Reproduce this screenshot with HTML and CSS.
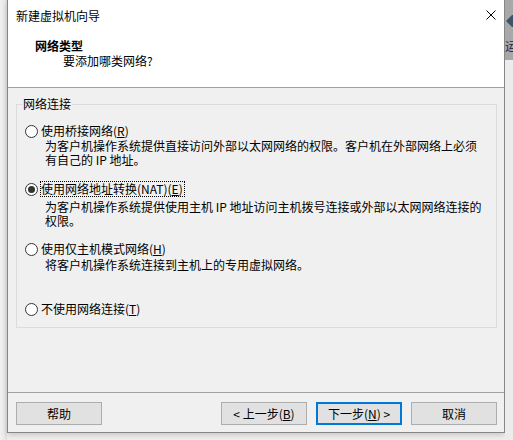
FILE: index.html
```html
<!DOCTYPE html>
<html lang="zh-CN">
<head>
<meta charset="utf-8">
<title>新建虚拟机向导</title>
<link rel="stylesheet" href="styles.css">
</head>
<body>
<div class="screen">
  <div class="left-bg"></div>
  <div class="window">
    <div class="titlebar">
      <span class="title">新建虚拟机向导</span>
      <svg class="close" width="10" height="10" viewBox="0 0 10 10"><path d="M0.5 0.5L9.5 9.5M9.5 0.5L0.5 9.5" stroke="#000" stroke-width="1" fill="none"/></svg>
    </div>
    <div class="header">
      <div class="h-title">网络类型</div>
      <div class="h-sub">要添加哪类网络?</div>
    </div>
    <div class="body">
      <fieldset class="group">
        <legend>网络连接</legend>
        <div class="opt opt1">
          <div class="row"><span class="radio"></span><span class="label">使用桥接网络(<u>R</u>)</span></div>
          <div class="desc">为客户机操作系统提供直接访问外部以太网网络的权限。客户机在外部网络上必须<br>有自己的 IP 地址。</div>
        </div>
        <div class="opt opt2">
          <div class="row"><span class="radio checked"></span><span class="label focus">使用网络地址转换(NAT)(<u>E</u>)</span></div>
          <div class="desc">为客户机操作系统提供使用主机 IP 地址访问主机拨号连接或外部以太网网络连接的<br>权限。</div>
        </div>
        <div class="opt opt3">
          <div class="row"><span class="radio"></span><span class="label">使用仅主机模式网络(<u>H</u>)</span></div>
          <div class="desc">将客户机操作系统连接到主机上的专用虚拟网络。</div>
        </div>
        <div class="opt opt4">
          <div class="row"><span class="radio"></span><span class="label">不使用网络连接(<u>T</u>)</span></div>
        </div>
      </fieldset>
    </div>
    <div class="footer">
      <button class="btn help">帮助</button>
      <button class="btn">&lt; 上一步(<u>B</u>)</button>
      <button class="btn default">下一步(<u>N</u>) &gt;</button>
      <button class="btn">取消</button>
    </div>
  </div>
  <div class="right-bg">
    <div class="rb-top">
      <svg class="rb-arrow" width="8" height="12" viewBox="0 0 8 12"><path d="M1 6L7 0H8V12H7Z" fill="#3f5266"/></svg>
      <span class="rb-char">运</span>
    </div>
    <div class="rb-rest"></div>
  </div>
</div>
</body>
</html>
```
FILE: styles.css
```css
body {
  margin: 0;
  background: #f0f0f0;
  font-family: "Noto Sans CJK SC", "Noto Sans", sans-serif;
  font-size: 12px;
  color: #000;
}

.screen {
  display: flex;
  width: 513px;
  height: 440px;
  overflow: hidden;
}

.left-bg {
  width: 7px;
  flex: none;
  background: linear-gradient(to right, #f0f0f0 0%, #ebebeb 60%, #dedede 100%);
}

.window {
  width: 498px;
  height: 433px;
  flex: none;
  box-sizing: border-box;
  border: 1px solid #868686;
  border-top: none;
  background: #f0f0f0;
  display: flex;
  flex-direction: column;
  box-shadow: 0 2px 6px rgba(0, 0, 0, 0.18);
}

.titlebar {
  height: 31px;
  flex: none;
  background: #fff;
  display: flex;
  align-items: center;
  justify-content: space-between;
  padding: 0 8px;
}

.title {
  line-height: 14px;
}

.close {
  display: block;
  margin-top: -1px;
}

.header {
  height: 57px;
  flex: none;
  box-sizing: border-box;
  background: #fff;
  border-bottom: 1px solid #a0a0a0;
  padding-top: 8px;
}

.h-title {
  font-weight: bold;
  line-height: 14px;
  padding-left: 27px;
}

.h-sub {
  line-height: 14px;
  padding-left: 55px;
  margin-top: 1px;
}

.body {
  flex: 1;
  padding-top: 9px;
}

.group {
  margin: 0 7px 0 8px;
  padding: 0 0 10px 0;
  border: 1px solid #dcdcdc;
  min-width: 0;
}

.group legend {
  margin-left: 5px;
  padding: 0 1px;
  line-height: 14px;
}

.opt {
  padding-left: 8px;
}

.opt1 { margin-top: 12px; }
.opt2 { margin-top: 14px; }
.opt3 { margin-top: 13px; }
.opt4 { margin-top: 29px; }

.row {
  display: flex;
  align-items: center;
  height: 16px;
}

.radio {
  width: 13px;
  height: 13px;
  box-sizing: border-box;
  border: 1px solid #333;
  border-radius: 50%;
  background: #fff;
  flex: none;
  margin-right: 2px;
  display: flex;
  align-items: center;
  justify-content: center;
}

.radio.checked::after {
  content: "";
  width: 7px;
  height: 7px;
  border-radius: 50%;
  background: #333;
}

.label {
  line-height: 14px;
  white-space: nowrap;
  margin-left: 1px;
}

.label.focus {
  margin-left: 0;
  border: 1px dotted #000;
  border-left-width: 1px;
  padding-right: 1px;
}

u {
  text-underline-offset: 1px;
}

.desc {
  margin-left: 20px;
  margin-top: 0;
  line-height: 14px;
  white-space: nowrap;
}

.opt2 .desc { margin-top: 3px; }
.opt3 .desc { margin-top: 1px; }

.footer {
  flex: none;
  border-top: 1px solid #a0a0a0;
  display: flex;
  gap: 9px;
  padding: 9px 7px 7px 8px;
}

.btn {
  width: 86px;
  height: 23px;
  box-sizing: border-box;
  border: 1px solid #adadad;
  background: #e1e1e1;
  font-family: inherit;
  font-size: 12px;
  color: #000;
  padding: 0;
  margin: 0;
  line-height: 19px;
}

.btn.help {
  margin-right: auto;
}

.btn.default {
  border: 2px solid #0078d7;
}

.right-bg {
  width: 8px;
  flex: none;
  display: flex;
  flex-direction: column;
  overflow: hidden;
}

.rb-top {
  height: 60px;
  flex: none;
  background: #a8a8a8;
  overflow: hidden;
}

.rb-arrow {
  display: block;
  margin-top: 15px;
}

.rb-char {
  display: block;
  margin-top: 13px;
  line-height: 12px;
  color: #2c2450;
  white-space: nowrap;
}

.rb-rest {
  flex: 1;
  background: #ececec;
}
```
